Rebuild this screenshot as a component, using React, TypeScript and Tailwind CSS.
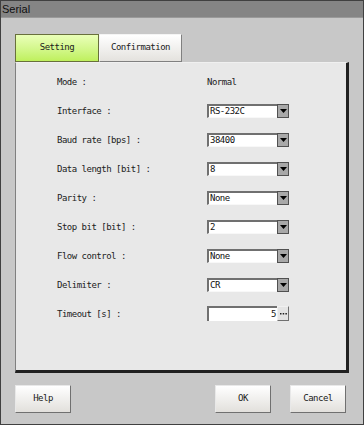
import React from "react";

const mono = { fontFamily: '"DejaVu Sans Mono", "Liberation Mono", monospace' };

function Select({ value }: { value: string }) {
  return (
    <div className="flex h-[14px] w-[82px] items-stretch">
      <div className="flex-1 border-t-2 border-l-2 border-t-[#707070] border-l-[#707070] border-b border-r-0 border-b-[#f8f8f8] bg-white pl-[1px] text-[9px] leading-[11px] tracking-[-0.5px] text-[#111]" style={mono}>
        {value}
      </div>
      <div className="flex w-[12px] items-center justify-center border border-[#505050] bg-[#a8a8a8]">
        <svg width="7" height="4" viewBox="0 0 7 4"><path d="M0 0 H7 L3.5 4 Z" fill="#000" /></svg>
      </div>
    </div>
  );
}

function Row({ label, children }: { label: string; children: React.ReactNode }) {
  return (
    <div className="flex h-[29px] items-center">
      <div className="w-[190px] pl-[41px] text-[9px] leading-[12px] tracking-[-0.5px] text-[#202020]" style={mono}>{label}</div>
      <div className="flex items-center pl-[1px] text-[9px] leading-[12px]">{children}</div>
    </div>
  );
}

function Btn({ label }: { label: string }) {
  return (
    <div className="flex h-[28px] w-[56px] items-center justify-center border border-[#e8e8e8] border-r-[#707070] border-b-[#707070] bg-gradient-to-b from-[#ffffff] to-[#e2e0dc] text-[9px] tracking-[-0.5px] text-[#202020]" style={mono}>
      {label}
    </div>
  );
}

export default function App() {
  return (
    <div className="flex h-[425px] w-[364px] flex-col border border-[#404040] bg-[#c8c8c8]">
      <div className="flex h-[17px] items-center border-b border-[#9a9a9a] bg-[#858585] pl-[1px] text-[11px] text-[#101010]" style={{ fontFamily: '"Liberation Sans", Arial, sans-serif' }}>
        Serial
      </div>
      <div className="flex flex-1 flex-col px-[14px] pt-[16px]">
        <div className="flex h-[28px]">
          <div className="flex w-[84px] items-center justify-center border border-[#68703c] bg-gradient-to-b from-[#eaffb8] to-[#bff05c] text-[9px] tracking-[-0.5px] text-[#202020]" style={mono}>
            Setting
          </div>
          <div className="flex w-[83px] items-center justify-center border border-[#f4f4f4] border-r-[#808080] border-b-[#808080] bg-gradient-to-b from-[#ffffff] to-[#e4e2de] text-[9px] tracking-[-0.5px] text-[#202020]" style={mono}>
            Confirmation
          </div>
        </div>
        <div className="flex h-[311px] w-[334px] flex-col border-l border-t border-l-[#808080] border-t-[#f0f0f0] border-r-[3px] border-b-[3px] border-r-[#202020] border-b-[#202020] bg-[#e8e8e8] pt-[4px]">
          <Row label="Mode :">
            <div className="text-[9px] leading-[12px] tracking-[-0.5px] text-[#202020]" style={mono}>Normal</div>
          </Row>
          <Row label="Interface :"><Select value="RS-232C" /></Row>
          <Row label="Baud rate [bps] :"><Select value="38400" /></Row>
          <Row label="Data length [bit] :"><Select value="8" /></Row>
          <Row label="Parity :"><Select value="None" /></Row>
          <Row label="Stop bit [bit] :"><Select value="2" /></Row>
          <Row label="Flow control :"><Select value="None" /></Row>
          <Row label="Delimiter :"><Select value="CR" /></Row>
          <Row label="Timeout [s] :">
            <div className="flex h-[15px] items-stretch">
              <div className="w-[70px] border-t-2 border-l-2 border-t-[#707070] border-l-[#707070] bg-white pr-[1px] text-right text-[9px] leading-[12px] tracking-[-0.5px] text-[#111]" style={mono}>5</div>
              <div className="flex w-[12px] items-center justify-center border border-[#f0f0f0] border-r-[#707070] border-b-[#707070] bg-[#e4e4e4]">
                <svg width="7" height="2" viewBox="0 0 7 2"><rect x="0" y="0" width="1.5" height="1.5" fill="#202020" /><rect x="2.7" y="0" width="1.5" height="1.5" fill="#202020" /><rect x="5.4" y="0" width="1.5" height="1.5" fill="#202020" /></svg>
              </div>
            </div>
          </Row>
        </div>
        <div className="mt-[12px] flex">
          <Btn label="Help" />
          <div className="ml-[144px]"><Btn label="OK" /></div>
          <div className="ml-[19px]"><Btn label="Cancel" /></div>
        </div>
      </div>
    </div>
  );
}
